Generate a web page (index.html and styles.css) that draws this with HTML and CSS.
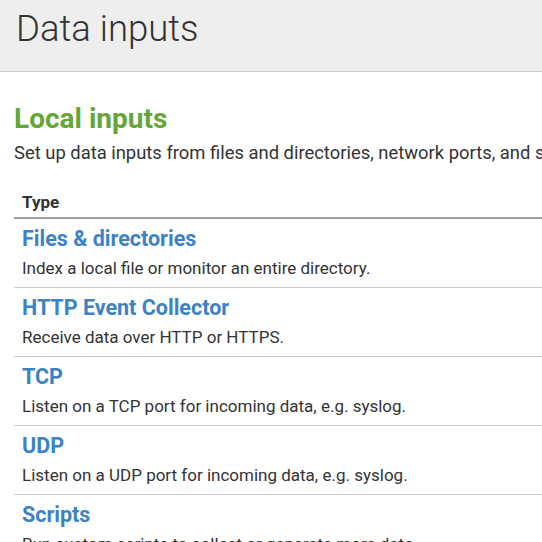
FILE: index.html
```html
<!DOCTYPE html>
<html>
<head>
<meta charset="utf-8">
<link rel="stylesheet" href="styles.css">
</head>
<body>
<header class="page-header">
  <h1 class="page-title">Data inputs</h1>
</header>
<main class="content">
  <h2 class="section-title">Local inputs</h2>
  <p class="section-desc">Set up data inputs from files and directories, network ports, and scripted inputs.</p>
  <div class="table">
    <div class="table-head">Type</div>
    <div class="row">
      <a class="row-title">Files &amp; directories</a>
      <div class="row-desc">Index a local file or monitor an entire directory.</div>
    </div>
    <div class="row">
      <a class="row-title">HTTP Event Collector</a>
      <div class="row-desc">Receive data over HTTP or HTTPS.</div>
    </div>
    <div class="row">
      <a class="row-title">TCP</a>
      <div class="row-desc">Listen on a TCP port for incoming data, e.g. syslog.</div>
    </div>
    <div class="row">
      <a class="row-title">UDP</a>
      <div class="row-desc">Listen on a UDP port for incoming data, e.g. syslog.</div>
    </div>
    <div class="row">
      <a class="row-title">Scripts</a>
      <div class="row-desc">Run custom scripts to collect or generate more data.</div>
    </div>
  </div>
</main>
</body>
</html>
```
FILE: styles.css
```css
html, body {
  margin: 0;
  padding: 0;
  background: #ffffff;
  overflow: hidden;
}
body {
  font-family: Roboto, "Liberation Sans", sans-serif;
  color: #333333;
  width: 542px;
}
.page-header {
  background: #eeeeee;
  border-bottom: 1px solid #cccccc;
  height: 71px;
  padding-left: 16px;
  box-sizing: content-box;
}
.page-title {
  margin: 0;
  padding-top: 1px;
  font-size: 36.5px;
  font-weight: 300;
  line-height: 56px;
  color: #333333;
  white-space: nowrap;
}
.content {
  padding-left: 14px;
  padding-top: 30px;
}
.section-title {
  margin: 0;
  font-size: 28px;
  font-weight: 700;
  color: #65a637;
  line-height: 34px;
}
.section-desc {
  margin: 4px 0 0;
  font-size: 18.4px;
  line-height: 26px;
  white-space: nowrap;
}
.table {
  margin-top: 22px;
}
.table-head {
  font-size: 17px;
  font-weight: 700;
  padding-left: 8px;
  padding-top: 2px;
  line-height: 24px;
  border-bottom: 2px solid #a0a0a0;
  padding-bottom: 3px;
}
.row {
  padding: 7px 0 7px 8px;
  border-bottom: 1px solid #cccccc;
  display: flex;
  flex-direction: column;
}
.row-title {
  font-size: 21.5px;
  font-weight: 700;
  color: #3c82c4;
  line-height: 26px;
  white-space: nowrap;
}
.row-desc {
  margin-top: 4px;
  font-size: 17px;
  line-height: 24px;
  white-space: nowrap;
}
```
